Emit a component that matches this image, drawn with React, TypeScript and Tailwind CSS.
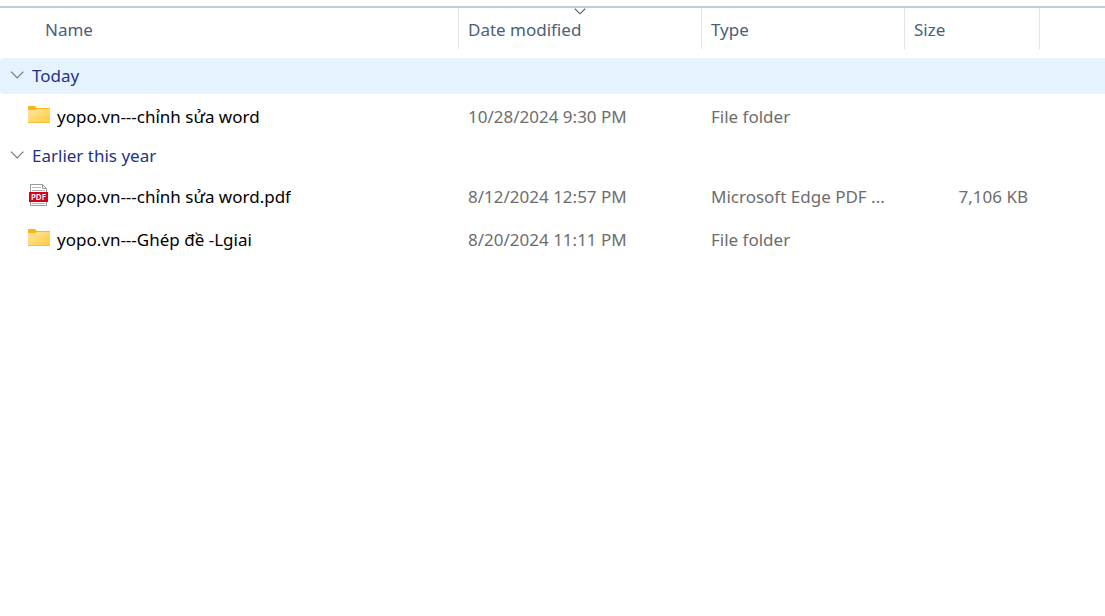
import { useState } from "react";

type Entry = {
  name: string;
  modified: string;
  type: string;
  size?: string;
  kind: "folder" | "pdf";
};

type Group = { label: string; entries: Entry[] };

const groups: Group[] = [
  {
    label: "Today",
    entries: [
      { name: "yopo.vn---chỉnh sửa word", modified: "10/28/2024 9:30 PM", type: "File folder", kind: "folder" },
    ],
  },
  {
    label: "Earlier this year",
    entries: [
      {
        name: "yopo.vn---chỉnh sửa word.pdf",
        modified: "8/12/2024 12:57 PM",
        type: "Microsoft Edge PDF ...",
        size: "7,106 KB",
        kind: "pdf",
      },
      { name: "yopo.vn---Ghép đề -Lgiai", modified: "8/20/2024 11:11 PM", type: "File folder", kind: "folder" },
    ],
  },
];

function FolderIcon() {
  return (
    <svg width="22" height="22" viewBox="0 0 22 22" aria-hidden="true" className="shrink-0">
      <defs>
        <linearGradient id="folder-front" x1="0" y1="0" x2="1" y2="1">
          <stop offset="0" stopColor="#ffe7a0" />
          <stop offset="1" stopColor="#ffca3e" />
        </linearGradient>
      </defs>
      <path d="M0 .6Q0 0 .6 0H6.6Q7.2 0 7.6 .6L8.6 2H21.4Q22 2 22 2.6V7H0Z" fill="#f8b819" />
      <path d="M0 4H7.4L9 3H22V16.4Q22 17 21.4 17H.6Q0 17 0 16.4Z" fill="url(#folder-front)" />
      <path d="M0 16H22V16.4Q22 17 21.4 17H.6Q0 17 0 16.4Z" fill="#f3bf3c" />
    </svg>
  );
}

function PdfIcon() {
  return (
    <svg width="22" height="26" viewBox="0 0 22 26" aria-hidden="true" className="shrink-0">
      <path d="M2.5.5H14.5L18.5 4.5V21.5H2.5Z" fill="#fff" stroke="#999" />
      <path d="M14.5.5V4.5H18.5" fill="none" stroke="#999" />
      <path d="M4 3.5H13M4 6.5H17M4 19.5H17" stroke="#b5b5b5" />
      <rect x="1" y="8" width="19" height="10" fill="#d6001c" />
      <text x="10.5" y="16" textAnchor="middle" fontSize="8" fontWeight="600" fontFamily="Noto Sans, sans-serif" fill="#fff">
        PDF
      </text>
    </svg>
  );
}

function Chevron({ open }: { open: boolean }) {
  return (
    <svg
      width="14"
      height="10"
      viewBox="0 0 14 10"
      aria-hidden="true"
      className={open ? "shrink-0" : "shrink-0 -rotate-90"}
    >
      <path d="M1 .6L7.2 6.8L13.4 .6" fill="none" stroke="#777" strokeWidth="1.2" />
    </svg>
  );
}

function ColumnHeader({ label, sorted = false }: { label: string; sorted?: boolean }) {
  return (
    <th scope="col" aria-sort={sorted ? "descending" : undefined} className="h-[51px] p-0 align-top font-normal">
      <button
        type="button"
        className="relative flex h-[41px] w-full items-center border-r border-[#e3e3e3] pt-0.5 pl-[9px] text-left"
      >
        {label}
        {sorted && (
          <svg width="12" height="7" viewBox="0 0 12 7" aria-hidden="true" className="absolute top-0 left-1/2 -translate-x-1/2">
            <path d="M.8 .6L6 5.8L11.2 .6" fill="none" stroke="#555" strokeWidth="1.1" />
          </svg>
        )}
      </button>
    </th>
  );
}

function GroupRows({ group, active, onSelect }: { group: Group; active: boolean; onSelect: () => void }) {
  const [open, setOpen] = useState(true);
  return (
    <tbody>
      <tr className="h-[37px]">
        <th colSpan={5} scope="rowgroup" className="p-0 align-top font-normal">
          <button
            type="button"
            aria-expanded={open}
            onClick={() => {
              setOpen(!open);
              onSelect();
            }}
            className={
              "flex h-9 w-full items-center gap-2 rounded-l-sm pl-[10px] text-left text-[#1e3287] " +
              (active ? "bg-[#e5f3ff]" : "bg-white")
            }
          >
            <Chevron open={open} />
            {group.label}
          </button>
        </th>
      </tr>
      {open &&
        group.entries.map((entry) => (
          <tr key={entry.name} className="h-[43px] text-[#6d6d6d]">
            <td className="p-0 pl-7 text-black">
              <div className="flex items-center gap-[7px]">
                {entry.kind === "folder" ? <FolderIcon /> : <PdfIcon />}
                <span className="truncate">{entry.name}</span>
              </div>
            </td>
            <td className="truncate p-0 pl-[9px]">{entry.modified}</td>
            <td className="truncate p-0 pl-[9px]">{entry.type}</td>
            <td className="p-0 pr-3 text-right">{entry.size}</td>
            <td className="p-0" />
          </tr>
        ))}
    </tbody>
  );
}

export default function App() {
  const [selected, setSelected] = useState("Today");
  return (
    <main className="min-h-screen bg-white pt-1.5 font-['Noto_Sans','Open_Sans',sans-serif] text-[17px] leading-6">
      <table className="w-full table-fixed border-collapse border-t-2 border-[#bfcedb]">
        <colgroup>
          <col className="w-[459px]" />
          <col className="w-[243px]" />
          <col className="w-[203px]" />
          <col className="w-[135px]" />
          <col />
        </colgroup>
        <thead className="text-left text-[#4c607a]">
          <tr>
            <th scope="col" className="h-[51px] p-0 align-top font-normal">
              <button
                type="button"
                className="flex h-[41px] w-full items-center border-r border-[#e3e3e3] pt-0.5 pl-[45px] text-left"
              >
                Name
              </button>
            </th>
            <ColumnHeader label="Date modified" sorted />
            <ColumnHeader label="Type" />
            <ColumnHeader label="Size" />
            <td className="p-0" />
          </tr>
        </thead>
        {groups.map((group) => (
          <GroupRows
            key={group.label}
            group={group}
            active={selected === group.label}
            onSelect={() => setSelected(group.label)}
          />
        ))}
      </table>
    </main>
  );
}
